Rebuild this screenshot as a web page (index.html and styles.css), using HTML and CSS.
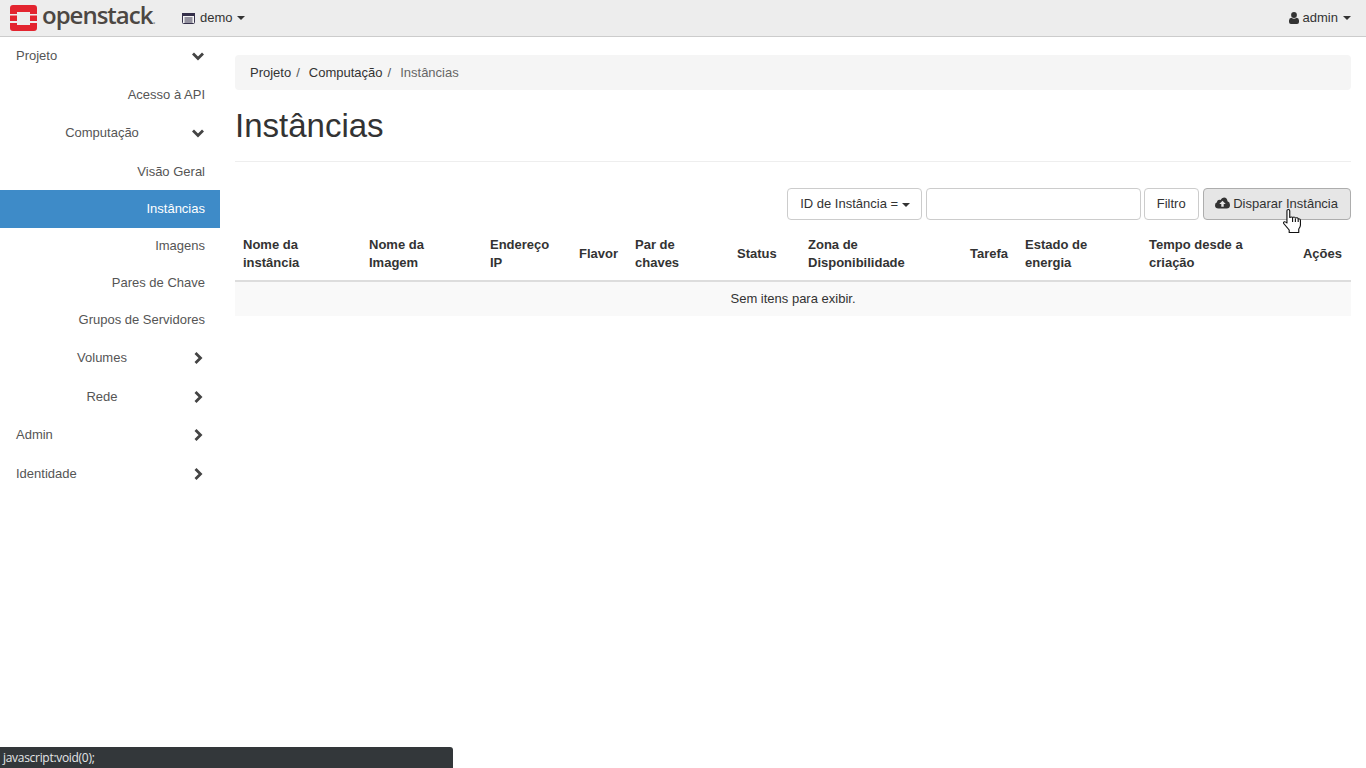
FILE: index.html
```html
<!DOCTYPE html>
<html lang="pt">
<head>
    <meta charset="UTF-8">
    <meta name="viewport" content="width=device-width, initial-scale=1.0">
    <title>Instâncias - OpenStack Dashboard</title>
    <link rel="stylesheet" href="styles.css">
</head>
<body>
    <header class="topbar">
        <a class="brand">
            <svg class="brand-logo" width="27" height="26" viewBox="0 0 27 26">
                <path fill="#e3242f" d="M3 0H24Q27 0 27 3V9H20V7H7V9H0V3Q0 0 3 0ZM0 18H7V20H20V18H27V23Q27 26 24 26H3Q0 26 0 23ZM0 10.500H7V16H0ZM20 10.500H27V16H20Z"/>
            </svg>
            <span class="brand-name">openstack<span class="brand-dot">.</span></span>
        </a>
        <a class="project-menu">
            <svg class="project-icon" width="13" height="11" viewBox="0 0 13 11">
                <rect x="0.500" y="0.500" width="12" height="10" rx="1" fill="#f4f4f4" stroke="#35304a"/>
                <path d="M0 0H13V3H0ZM2.500 4.500H10.500V5.500H2.500ZM2.500 6.500H10.500V7.500H2.500ZM2.500 8.500H10.500V9.500H2.500Z" fill="#35304a"/>
            </svg>
            <span>demo</span><span class="caret"></span>
        </a>
        <a class="user-menu">
            <svg class="user-icon" width="10" height="12" viewBox="0 0 10 12">
                <circle cx="5" cy="3" r="2.900" fill="#333"/>
                <path d="M0 10V8.500Q0 6 2.500 5.800Q5 7.500 7.500 5.800Q10 6 10 8.500V10Q10 12 8 12H2Q0 12 0 10Z" fill="#333"/>
            </svg>
            <span>admin</span><span class="caret"></span>
        </a>
    </header>

    <div class="layout">
        <nav class="sidebar">
            <a class="nav-item nav-top">Projeto <svg class="chev" width="14" height="14" viewBox="0 0 14 14"><path d="M2 4.500L7 9.500L12 4.500" /></svg></a>
            <a class="nav-item nav-leaf nav-nudge">Acesso à API</a>
            <a class="nav-item nav-group">Computação <svg class="chev" width="14" height="14" viewBox="0 0 14 14"><path d="M2 4.500L7 9.500L12 4.500" /></svg></a>
            <a class="nav-item nav-leaf nav-nudge">Visão Geral</a>
            <a class="nav-item nav-leaf nav-active">Instâncias</a>
            <a class="nav-item nav-leaf nav-sub">Imagens</a>
            <a class="nav-item nav-leaf nav-sub">Pares de Chave</a>
            <a class="nav-item nav-leaf nav-sub">Grupos de Servidores</a>
            <a class="nav-item nav-group nav-lower">Volumes <svg class="chev" width="14" height="14" viewBox="0 0 14 14"><path d="M4.500 2L9.500 7L4.500 12" /></svg></a>
            <a class="nav-item nav-group nav-lower">Rede <svg class="chev" width="14" height="14" viewBox="0 0 14 14"><path d="M4.500 2L9.500 7L4.500 12" /></svg></a>
            <a class="nav-item nav-top nav-lower">Admin <svg class="chev" width="14" height="14" viewBox="0 0 14 14"><path d="M4.500 2L9.500 7L4.500 12" /></svg></a>
            <a class="nav-item nav-top nav-lower">Identidade <svg class="chev" width="14" height="14" viewBox="0 0 14 14"><path d="M4.500 2L9.500 7L4.500 12" /></svg></a>
        </nav>

        <main class="content">
            <ol class="breadcrumb">
                <li>Projeto</li>
                <li class="sep">/</li>
                <li>Computação</li>
                <li class="sep">/</li>
                <li class="current">Instâncias</li>
            </ol>

            <h1 class="page-title">Instâncias</h1>

            <div class="table-actions">
                <button class="btn btn-select" type="button">ID de Instância = <span class="caret"></span></button>
                <input class="filter-input" type="text">
                <button class="btn" type="button">Filtro</button>
                <button class="btn btn-hover" type="button">
                    <svg class="cloud-icon" width="15" height="12" viewBox="0 0 15 12">
                        <path fill="#333" fill-rule="evenodd" d="M3.500 11.500Q0 11.500 0 8.300Q0 6 2 5.300Q2 2.800 4.500 2.800Q5 2.800 5.500 3Q6.700 0.500 9 0.500Q12.200 0.500 12.500 4.300Q15 5 15 8Q15 11.500 11.500 11.500ZM7.500 3.800L4.300 7H6.300V9.800H8.700V7H10.700Z"/>
                    </svg>
                    Disparar Instância
                </button>
            </div>

            <table class="data-table">
                <thead>
                    <tr>
                        <th class="col-name">Nome da instância</th>
                        <th class="col-image">Nome da Imagem</th>
                        <th class="col-ip">Endereço IP</th>
                        <th class="col-flavor">Flavor</th>
                        <th class="col-key">Par de chaves</th>
                        <th class="col-status">Status</th>
                        <th class="col-zone">Zona de Disponibilidade</th>
                        <th class="col-task">Tarefa</th>
                        <th class="col-power">Estado de energia</th>
                        <th class="col-age">Tempo desde a criação</th>
                        <th class="col-actions">Ações</th>
                    </tr>
                </thead>
                <tbody>
                    <tr>
                        <td colspan="11" class="empty">Sem itens para exibir.</td>
                    </tr>
                </tbody>
            </table>
        </main>
    </div>

    <!-- mouse pointer over the button -->
    <svg class="pointer" width="18" height="24" viewBox="0 0 16 24" preserveAspectRatio="none">
        <path fill="#fff" stroke="#111" stroke-width="1" stroke-linejoin="round" d="M3.500 1.800Q3.500 0.500 4.800 0.500Q6 0.500 6 1.800V8.500Q8 7.500 8.500 8.500Q10.500 7.500 11 9Q13 8.300 13.500 9.800Q15.500 9.500 15.500 11.500V16Q15.500 18 14 20V23.500H5.500V21L1 15Q0 13.500 1 12.800Q2 12.200 3.500 14Z"/>
        <path fill="none" stroke="#111" stroke-width="1" d="M8.500 9V13M11 9.500V13M13.500 10V13"/>
    </svg>

    <div class="status-bar">javascript:void(0);</div>
</body>
</html>
```

FILE: styles.css
```css
* {
    box-sizing: border-box;
}
body {
    margin: 0;
    font-family: "Liberation Sans", Arial, sans-serif;
    font-size: 13px;
    line-height: 20px;
    color: #333;
    background-color: #fff;
    height: 768px;
    overflow: hidden;
}
.topbar {
    display: flex;
    align-items: center;
    height: 37px;
    padding: 0 15px 0 10px;
    background-color: #ededed;
    border-bottom: 1px solid #ccc;
}
.brand {
    display: flex;
    align-items: center;
    width: 172px;
}
.brand-logo {
    flex: none;
}
.brand-name {
    margin-left: 5px;
    margin-top: -2px;
    font-family: "Open Sans", sans-serif;
    font-size: 24px;
    font-weight: 600;
    line-height: 30px;
    letter-spacing: -1px;
    color: #4c4743;
}
.brand-dot {
    color: #999;
    font-size: 12px;
}
.project-menu {
    display: flex;
    align-items: center;
    color: #333;
}
.project-icon {
    margin-right: 5px;
}
.project-menu .caret {
    margin-left: 4px;
}
.user-menu .caret {
    margin-left: 5px;
}
.user-menu {
    display: flex;
    align-items: center;
    margin-left: auto;
    color: #333;
}
.user-icon {
    margin-right: 4px;
}
.caret {
    display: inline-block;
    width: 0;
    height: 0;
    border-top: 4px solid #333;
    border-left: 4px solid transparent;
    border-right: 4px solid transparent;
    vertical-align: middle;
}
.layout {
    display: flex;
}
.sidebar {
    flex: none;
    width: 220px;
    display: flex;
    flex-direction: column;
}
.nav-item {
    display: flex;
    align-items: center;
    height: 38.250px;
    color: #555;
    position: relative;
}
.nav-nudge {
    padding-top: 2px;
}
.nav-sub {
    height: 37px;
    padding-bottom: 2px;
}
.nav-lower {
    height: 38.500px;
}
.nav-top {
    justify-content: flex-start;
    padding-left: 16px;
}
.nav-group {
    justify-content: center;
    padding-right: 16px;
}
.nav-leaf {
    justify-content: flex-end;
    padding-right: 15px;
}
.nav-active {
    height: 38px;
    background-color: #3e8bc8;
    color: #fff;
}
.chev {
    position: absolute;
    left: 191px;
    top: 50%;
    margin-top: -7px;
    fill: none;
    stroke: #444;
    stroke-width: 2.800;
}
.content {
    flex: none;
    width: 1146px;
    padding: 18px 15px 0 15px;
}
.breadcrumb {
    display: flex;
    height: 35px;
    align-items: center;
    margin: 0;
    padding: 0 15px;
    list-style: none;
    background-color: #f5f5f5;
    border-radius: 4px;
    color: #333;
}
.breadcrumb .sep {
    padding: 0 5px;
    color: #555;
}
.breadcrumb .sep + li {
    margin-left: 4px;
}
.breadcrumb .current {
    color: #666;
}
.page-title {
    margin: 0;
    height: 72px;
    padding-top: 18px;
    font-size: 33px;
    line-height: 36px;
    font-weight: normal;
    color: #333;
    border-bottom: 1px solid #eee;
}
.table-actions {
    display: flex;
    justify-content: flex-end;
    gap: 4px;
    margin-top: 26px;
    height: 32px;
}
.btn {
    height: 32px;
    padding: 0 12px 1px;
    font-family: inherit;
    font-size: 13px;
    color: #333;
    background-color: #fff;
    border: 1px solid #ccc;
    border-radius: 4px;
    white-space: nowrap;
}
.btn-select {
    padding-right: 11px;
}
.btn-hover {
    padding-left: 11px;
    background-color: #e6e6e6;
    border-color: #adadad;
}
.cloud-icon {
    vertical-align: -1px;
}
.filter-input {
    width: 215px;
    height: 32px;
    margin-right: -1px;
    border: 1px solid #ccc;
    border-radius: 4px;
}
.data-table {
    width: 100%;
    margin-top: 7px;
    border-collapse: collapse;
    table-layout: fixed;
}
.data-table th {
    height: 54px;
    padding: 7px 8px;
    font-weight: bold;
    line-height: 18px;
    text-align: left;
    vertical-align: middle;
    border-bottom: 2px solid #ddd;
    color: #333;
}
.data-table .col-actions {
    text-align: right;
    padding-right: 9px;
}
.col-name { width: 126px; }
.col-image { width: 121px; }
.col-ip { width: 89px; }
.col-flavor { width: 56px; }
.col-key { width: 102px; }
.col-status { width: 71px; }
.col-zone { width: 162px; }
.col-task { width: 55px; }
.col-power { width: 124px; }
.col-age { width: 146px; }
.data-table .empty {
    height: 35px;
    padding: 0 0 1px;
    text-align: center;
    background-color: #f9f9f9;
    color: #333;
}
.pointer {
    position: absolute;
    left: 1283px;
    top: 209px;
}
.status-bar {
    position: absolute;
    left: 0;
    bottom: 0;
    width: 453px;
    height: 21px;
    padding-left: 3px;
    font-family: "Open Sans", sans-serif;
    font-size: 12px;
    line-height: 22px;
    letter-spacing: -0.3px;
    color: #e4e6e8;
    background-color: #33373a;
    border-top-right-radius: 3px;
}
```
